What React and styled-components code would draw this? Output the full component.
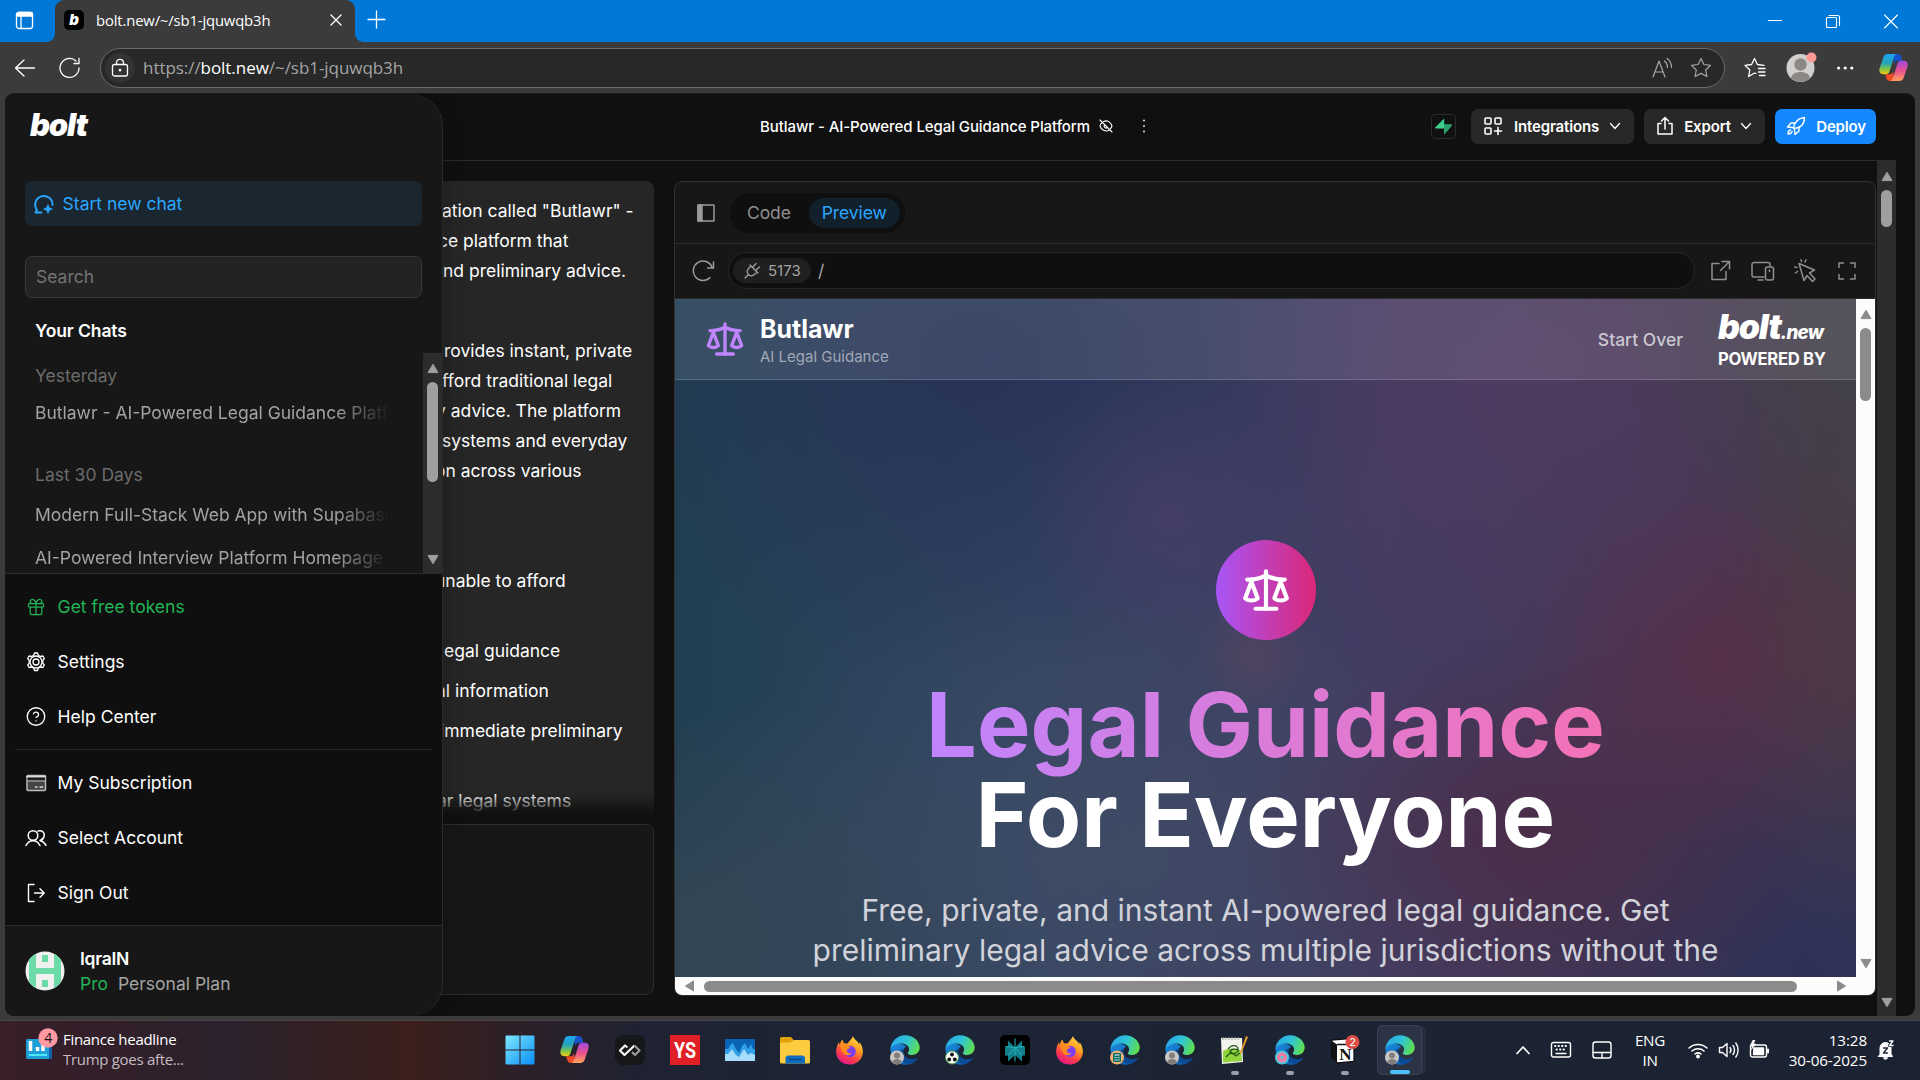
import React from 'react';
import styled, { createGlobalStyle, css } from 'styled-components';
import { Scale, Gift, CircleHelp } from 'lucide-react';

const GlobalStyle = createGlobalStyle`
  * { box-sizing: border-box; }
  body { margin: 0; background: #3b3b3b; overflow: hidden; }
`;

const ui = `'Open Sans', 'Noto Sans', sans-serif`;
const inter = `Inter, 'Liberation Sans', sans-serif`;

const Screen = styled.div`
  width: 1920px;
  height: 1080px;
  display: flex;
  flex-direction: column;
  background: #3b3b3b;
  font-family: ${inter};
  color: #fff;
  overflow: hidden;
  white-space: nowrap;
`;

/* ---------- browser chrome ---------- */

const TitleBar = styled.div`
  height: 42px;
  background: #0078d7;
  display: flex;
  align-items: stretch;
  font-family: ${ui};
`;
const TabsButton = styled.div`
  width: 55px;
  padding: 11px 0 0 15px;
`;
const Tab = styled.div`
  width: 300px;
  background: #3b3b3b;
  border-radius: 9px 9px 0 0;
  display: flex;
  align-items: center;
  padding: 0 13px 2px 9px;
  font-size: 14.8px;
  position: relative;

  &::before, &::after {
    content: '';
    position: absolute;
    bottom: 0;
    width: 8px;
    height: 8px;
  }
  &::before { left: -8px; background: radial-gradient(circle at 0 0, transparent 7.5px, #3b3b3b 8px); }
  &::after { right: -8px; background: radial-gradient(circle at 100% 0, transparent 7.5px, #3b3b3b 8px); }
`;
const Favicon = styled.div`
  width: 20px;
  height: 20px;
  border-radius: 5px;
  background: #000;
  font: italic 900 15px ${inter};
  line-height: 19px;
  text-align: center;
  margin-right: 12px;
`;
const TabTitle = styled.span`
  flex: 1;
  letter-spacing: -0.13px;
`;
const NewTab = styled.div`
  padding: 10px 0 0 12px;
  flex: 1;
`;
const WindowButtons = styled.div`
  display: flex;
  gap: 38px;
  padding: 11px 19px 0 0;
`;
const Toolbar = styled.div`
  height: 51px;
  display: flex;
  align-items: center;
  padding: 0 12px 0 14px;
  font-family: ${ui};
`;
const NavButtons = styled.div`
  display: flex;
  gap: 23px;
  width: 86px;
`;
const AddressBar = styled.div`
  width: 1625px;
  height: 40px;
  border: 1px solid #6a6a6a;
  border-radius: 20px;
  background: #282828;
  display: flex;
  align-items: center;
  padding: 0 12px 0 4px;
`;
const LockCircle = styled.div`
  width: 30px;
  height: 30px;
  border-radius: 50%;
  background: #333;
  display: grid;
  place-items: center;
  margin-right: 8px;
`;
const Url = styled.span`
  flex: 1;
  font-size: 17px;
  color: #a5a5a5;
  letter-spacing: -0.05px;
  b { font-weight: 400; color: #fff; }
`;
const BarIcons = styled.div`
  display: flex;
  gap: 17px;
  align-items: center;
`;
const ToolbarRight = styled.div`
  flex: 1;
  display: flex;
  align-items: center;
  justify-content: flex-end;
  gap: 20px;
  svg:last-child { margin-left: 4px; }
`;

/* ---------- app ---------- */

const AppFrame = styled.div`
  height: 923px;
  margin: 0 5px;
  border-radius: 9px;
  background: #101010;
  position: relative;
  overflow: hidden;
  border-top: 1px solid #1c1c1c;
`;
const AppHeader = styled.header`
  width: 1891px;
  height: 67px;
  border-bottom: 1px solid #2b2b2b;
  display: flex;
  align-items: center;
  padding: 0 20px 2px 755px;
`;
const ProjectTitle = styled.div`
  flex: 1;
  display: flex;
  align-items: center;
  font-size: 15px;
  font-weight: 500;
  color: #fff;
  span { width: 339px; letter-spacing: -0.08px; }
  svg + svg { margin-left: 21px; }
`;
const SupabaseBadge = styled.div`
  width: 25px;
  height: 25px;
  border: 1px solid #2b2b2b;
  border-radius: 4px;
  display: grid;
  place-items: center;
  margin-right: 15px;
`;
const HeaderButton = styled.button`
  width: ${(p) => p.$w}px;
  height: 35px;
  margin-left: ${(p) => p.$ml || 0}px;
  padding: 0 ${(p) => (p.$primary ? 10 : 13)}px 0 11px;
  border: 0;
  border-radius: 7px;
  background: ${(p) => (p.$primary ? '#1488fc' : '#282828')};
  color: #fff;
  font: 600 15px ${inter};
  letter-spacing: -0.15px;
  display: flex;
  align-items: center;
  justify-content: space-between;
`;
const Body = styled.main`
  height: 855px;
  display: flex;
`;
const ChatColumn = styled.section`
  width: 649px;
  padding-top: 20px;
  display: flex;
  flex-direction: column;
`;
const Message = styled.div`
  height: 635px;
  background: #262626;
  border-radius: 8px 8px 0 0;
  padding: 15px 0 0 437px;
  position: relative;

  &::after {
    content: '';
    position: absolute;
    left: 0; right: 0; bottom: 0;
    height: 23px;
    background: linear-gradient(rgba(16,16,16,0), #101010 95%);
  }
`;
const MessageLine = styled.p`
  margin: ${(p) => p.$gap || 0}px 0 0 ${(p) => p.$shift || 0}px;
  font-size: 17.5px;
  line-height: 30px;
  color: #fff;
`;
const PromptBox = styled.div`
  height: 171px;
  margin-top: 8px;
  background: #171717;
  border: 1px solid #2d2d2d;
  border-radius: 8px;
`;
const Workbench = styled.section`
  width: 1202px;
  height: 815px;
  margin: 20px 1px 0 20px;
  background: #171717;
  border: 1px solid #303030;
  border-radius: 8px;
  overflow: hidden;
`;
const ModeRow = styled.div`
  height: 62px;
  border-bottom: 1px solid #2d2d2d;
  display: flex;
  align-items: center;
  padding: 0 0 0 21px;
`;
const ModePill = styled.div`
  width: 175px;
  height: 40px;
  margin-left: 14px;
  border-radius: 20px;
  background: #0f0f0f;
  display: flex;
  align-items: center;
  padding: 5px 4px;
  font-size: 17.5px;
  letter-spacing: -0.1px;
`;
const Mode = styled.div`
  height: 30px;
  line-height: 30px;
  border-radius: 15px;
  padding: 0 13px;
  color: #8f8f8f;
  margin-right: 5px;
  ${(p) => p.$on && css`
    color: #2ba6ff;
    background: #11202a;
    margin: 0;
  `}
`;
const UrlRow = styled.div`
  height: 55px;
  border-bottom: 1px solid #2d2d2d;
  display: flex;
  align-items: center;
  padding: 0 18px 1px 17px;
`;
const UrlInput = styled.div`
  width: 967px;
  height: 37px;
  margin: 0 15px 0 13px;
  border: 1px solid #272727;
  border-radius: 19px;
  background: #0f0f0f;
  display: flex;
  align-items: center;
  padding-left: 4px;
  font-size: 17.5px;
  color: #a3a3a3;
`;
const Port = styled.div`
  width: 78px;
  height: 25px;
  border-radius: 13px;
  background: #1f1f1f;
  font-size: 15px;
  display: flex;
  align-items: center;
  gap: 7px;
  padding-left: 11px;
  margin-right: 7px;
`;
const RowIcons = styled.div`
  flex: 1;
  display: flex;
  justify-content: space-between;
  align-items: center;
  color: #8f8f8f;
`;
const Frame = styled.div`
  display: grid;
  grid-template-columns: 1181px 19px;
  grid-template-rows: 678px 18px;
  background: #fcfcfc;
`;

/* ---------- previewed site ---------- */

const Site = styled.div`
  overflow: hidden;
  background:
    radial-gradient(ellipse 260px 300px at 1200px 0px, rgba(64,66,74,1), transparent),
    radial-gradient(ellipse 160px 480px at 1200px 220px, rgba(74,62,68,.8), transparent),
    radial-gradient(circle 140px at 490px 215px, rgba(90,64,112,.4), transparent),
    radial-gradient(circle 60px at 580px 355px, rgba(105,72,90,.4), transparent),
    radial-gradient(ellipse 340px 290px at 860px 80px, rgba(86,60,100,.6), transparent),
    radial-gradient(ellipse 220px 190px at 1050px 360px, rgba(96,44,68,.6), transparent),
    radial-gradient(ellipse 300px 190px at 860px 540px, rgba(76,42,66,.75), transparent),
    radial-gradient(ellipse 420px 320px at 310px 60px, rgba(36,46,84,.8), transparent),
    radial-gradient(ellipse 380px 340px at 1181px 700px, rgba(46,50,88,1) 20%, transparent),
    radial-gradient(ellipse 320px 240px at 30px 640px, rgba(58,72,86,.8), transparent),
    radial-gradient(ellipse 420px 300px at 430px 560px, rgba(66,78,102,.7), transparent),
    linear-gradient(90deg, #203f51 0%, #334563 30%, #433b62 60%, #47344b 100%);
`;
const SiteHeader = styled.div`
  height: 81px;
  background: rgba(255,255,255,.1);
  border-bottom: 1px solid rgba(255,255,255,.16);
  display: flex;
  align-items: center;
  padding: 0 30px 0 30px;
`;
const Brand = styled.div`
  flex: 1;
  padding-left: 15px;
  h2 { margin: 0; font-size: 25px; line-height: 35px; font-weight: 700; letter-spacing: -0.05px; }
  p { margin: 0; font-size: 15px; line-height: 20px; color: #a1a8b8; }
`;
const StartOver = styled.span`
  font-size: 17.5px;
  font-weight: 500;
  color: #c9c7d1;
  margin-right: 35px;
`;
const Powered = styled.div`
  width: 108px;
  padding-top: 0;
  font-size: 16.7px;
  font-weight: 700;
  line-height: 18px;
  letter-spacing: -0.35px;
`;
const Logo = styled.div`
  font: italic 900 ${(p) => p.$size}px/${(p) => p.$size}px ${inter};
  letter-spacing: -1.2px;
  small { font-size: 18.800px; font-weight: 800; letter-spacing: -0.8px; }
`;
const Hero = styled.div`
  padding-top: 160px;
  display: flex;
  flex-direction: column;
  align-items: center;
  h1 {
    margin: 40px 0 0;
    font-size: 90px;
    line-height: 90px;
    font-weight: 700;
    text-align: center;
    padding-bottom: 30px;
  }
  p { margin: 0; font-size: 30px; line-height: 40px; color: #d1d2da; text-align: center; }
`;
const HeroCircle = styled.div`
  width: 100px;
  height: 100px;
  border-radius: 50%;
  background: linear-gradient(90deg, #a855f7, #db2777);
  display: grid;
  place-items: center;
`;
const GradientText = styled.span`
  background: linear-gradient(90deg, #c084fc, #f472b6);
  -webkit-background-clip: text;
  background-clip: text;
  color: transparent;
`;

/* ---------- scrollbars ---------- */

const VScroll = styled.div`
  width: 19px;
  height: ${(p) => p.$h}px;
  padding: 10px 0 8px;
  background: ${(p) => (p.$light ? '#fcfcfc' : '#2c2c2c')};
  color: ${(p) => (p.$light ? '#8b8b8b' : '#9f9f9f')};
  display: flex;
  flex-direction: column;
  align-items: center;
`;
const VThumb = styled.div`
  width: 11px;
  height: ${(p) => p.$h}px;
  margin: 8px 0 auto;
  border-radius: 6px;
  background: currentColor;
`;
const HScroll = styled.div`
  display: flex;
  align-items: center;
  color: #8b8b8b;
  padding: 0 9px;
  grid-column: 1;
`;
const HThumb = styled.div`
  width: 1093px;
  height: 11px;
  margin: 0 auto 0 9px;
  border-radius: 6px;
  background: currentColor;
`;

/* ---------- sidebar ---------- */

const Sidebar = styled.aside`
  position: absolute;
  left: 0;
  top: 0;
  width: 438px;
  height: 922px;
  background: #171717;
  border-right: 1px solid #2b2b2b;
  border-radius: 0 32px 32px 0;
  box-shadow: 2px 0 20px rgba(0,0,0,.25);
  display: flex;
  flex-direction: column;
  overflow: hidden;
`;
const SidebarLogo = styled(Logo)`
  padding: 15px 0 0 25px;
  height: 87px;
`;
const StartChat = styled.div`
  height: 45px;
  margin: 0 20px;
  padding-left: 9px;
  border-radius: 7px;
  background: #1a2630;
  color: #2ba6ff;
  font-size: 17.5px;
  display: flex;
  align-items: center;
  gap: 8.6px;
`;
const Search = styled.div`
  height: 42px;
  margin: 30px 20px 0;
  padding-left: 10px;
  border: 1px solid #383838;
  border-radius: 7px;
  background: #232323;
  color: #747474;
  font-size: 17.5px;
  line-height: 40px;
`;
const ChatsTitle = styled.div`
  padding: 22px 0 0 30px;
  height: 55px;
  font-size: 17.5px;
  font-weight: 600;
  line-height: 22px;
  letter-spacing: -0.1px;
`;
const ChatList = styled.div`
  height: 220px;
  display: flex;
  justify-content: space-between;
`;
const ChatRows = styled.div`
  width: 387px;
  padding-left: 30px;
  font-size: 17.5px;
  line-height: 24px;
`;
const ChatGroup = styled.div`
  margin-top: ${(p) => p.$mt}px;
  color: #6b6b6b;
`;
const ChatItem = styled.div`
  margin-top: ${(p) => p.$mt}px;
  width: 357px;
  color: #a3a3a3;
  overflow: hidden;
  mask-image: linear-gradient(90deg, #000 300px, transparent 354px);
`;
const Menu = styled.div`
  height: 353px;
  background: #0f0f0f;
  border-top: 1px solid #2b2b2b;
  border-bottom: 1px solid #2b2b2b;
  padding-top: 5px;
`;
const MenuItem = styled.div`
  height: 55px;
  padding-left: 20px;
  display: flex;
  align-items: center;
  gap: 10.6px;
  font-size: 17.5px;
  color: ${(p) => p.$color || '#fff'};
  svg { width: 22px; }
`;
const Divider = styled.div`
  height: 1px;
  margin: 5px 10px;
  background: #262626;
`;
const Profile = styled.div`
  flex: 1;
  display: flex;
  align-items: center;
  gap: 15px;
  padding: 0 0 0 20px;
  font-size: 17.5px;
  line-height: 25px;
  strong { font-weight: 600; display: block; letter-spacing: -0.3px; }
  span { color: #a3a3a3; margin-left: 10px; }
  em { font-style: normal; color: #22b455; }
`;

/* ---------- taskbar ---------- */

const Taskbar = styled.footer`
  height: 60px;
  margin-top: 4px;
  border-top: 1px solid #4a4648;
  background: linear-gradient(90deg, #381e27 0, #2b212c 230px, #3b1f1b 410px, #2c2029 520px, #1f2232 640px, #1c2435 900px, #1b2231 1920px);
  display: flex;
  font-family: ${ui};
`;
const News = styled.div`
  width: 492px;
  padding: 8px 0 0 25px;
  display: flex;
  font-size: 15px;
  line-height: 20px;
  letter-spacing: -0.3px;
  svg { margin-top: -1px; }
  div { color: #c5bcc0; margin-left: 4px; }
  b { display: block; font-weight: 400; color: #fff; }
`;
const Apps = styled.div`
  display: flex;
  width: 950px;
`;
const AppSlot = styled.div`
  width: 55px;
  height: 59px;
  display: flex;
  flex-direction: column;
  align-items: center;
  padding-top: 14px;
  svg { display: block; flex: none; }
`;
const ActiveSlot = styled(AppSlot)`
  width: 45px;
  height: 50px;
  margin: 4px 0 0 5px;
  padding-top: 9px;
  border: 1px solid #3a4152;
  border-radius: 5px;
  background: #2c3344;
  box-shadow: 5px 0 0 -1px #262d3d;
`;
const RunDot = styled.i`
  width: ${(p) => (p.$on ? 20 : 8)}px;
  height: 4px;
  border-radius: 2px;
  margin-top: ${(p) => (p.$on ? 5 : 6)}px;
  background: ${(p) => (p.$on ? '#4cc2ff' : '#99a0ab')};
`;
const Tray = styled.div`
  flex: 1;
  display: flex;
  align-items: center;
  justify-content: flex-end;
  padding: 0 25px 2px 0;
  font-size: 15.2px;
  line-height: 20px;
`;
const TrayTools = styled.div`
  display: flex;
  align-items: center;
  gap: 19px;
`;
const Lang = styled.div`
  width: 34px;
  text-align: center;
  letter-spacing: -0.3px;
  margin: 0 21px 0 20px;
`;
const Status = styled.div`
  display: flex;
  gap: 10px;
  align-items: center;
`;
const Clock = styled.div`
  text-align: right;
  margin: 0 10px 0 0;
  width: 98px;
  letter-spacing: -0.1px;
`;

/* ---------- drawings ---------- */

const Ico = ({ w = 20, h, vb, sw = 1.5, children, ...rest }) => (
  <svg width={w} height={h || w} viewBox={vb || `0 0 ${w} ${h || w}`} fill="none" stroke="currentColor"
    strokeWidth={sw} strokeLinecap="round" strokeLinejoin="round" {...rest}>{children}</svg>
);
const Up = () => <svg width="12" height="11" viewBox="0 0 12 11"><path d="M6 1.2 11 9.6H1Z" fill="currentColor" stroke="currentColor" strokeLinejoin="round" /></svg>;
const Down = () => <svg width="12" height="11" viewBox="0 0 12 11"><path d="M6 9.800 1 1.400h10Z" fill="currentColor" stroke="currentColor" strokeLinejoin="round" /></svg>;
const Side = ({ left }) => <svg width="11" height="12" viewBox="0 0 11 12"><path d={left ? 'M1.5 6 9.5 1v10Z' : 'M9.5 6 1.5 1v10Z'} fill="currentColor" stroke="currentColor" strokeLinejoin="round" /></svg>;
const Chevron = () => <Ico w={12} h={8} sw={1.3}><path d="m1.500 1.500 4.500 5 4.500-5" /></Ico>;

const Copilot = ({ size = 28 }) => (
  <svg width={size} height={size} viewBox="0 0 28 28">
    <defs>
      <linearGradient id="cpa" x1="0" y1="0" x2="0" y2="1">
        <stop offset="0" stopColor="#1ba4f2" /><stop offset=".45" stopColor="#25a5b8" /><stop offset=".75" stopColor="#7fc646" /><stop offset="1" stopColor="#fbc915" />
      </linearGradient>
      <linearGradient id="cpb" x1="0" y1="0" x2="0" y2="1">
        <stop offset="0" stopColor="#a04be0" /><stop offset=".5" stopColor="#e8508d" /><stop offset="1" stopColor="#ffa35c" />
      </linearGradient>
    </defs>
    <path d="M13 1h5c2 0 3 1.200 3.600 3l1 3.500h-4.200c-2 0-3 1-3.600 3Z" fill="#1753c8" />
    <path d="M15 27h-4.500c-2 0-3-1.200-3.600-3l-1-3.500h4c2 0 3-1 3.600-3Z" fill="#ed4a26" />
    <path d="M8.500 1h8.300c-1.300.5-1.900 1.600-2.500 3.500l-4 12.800c-.7 2.200-1.800 3.200-4 3.200H4C.8 20.500-.2 18 .5 15L4 4.500C4.800 2 6.200 1 8.500 1Z" fill="url(#cpa)" />
    <path d="M19.500 27h-8.300c1.300-.5 1.900-1.600 2.500-3.500l4-12.800c.7-2.200 1.800-3.200 4-3.200H24c3.200 0 4.200 2.500 3.500 5.500L24 23.500c-.8 2.500-2.200 3.500-4.500 3.500Z" fill="url(#cpb)" />
  </svg>
);

const EdgeBadges = {
  user: <><circle cx="7" cy="22.500" r="7" fill="#c9c7c5" /><circle cx="7" cy="20.500" r="3" fill="#807d7b" /><path d="M2 27c1-4 9-4 10 0-2.500 3.300-7.500 3.300-10 0Z" fill="#807d7b" /></>,
  ball: <><circle cx="7" cy="22.500" r="6.500" fill="#fff" stroke="#4b9d3e" /><circle cx="7" cy="19.500" r="1.900" fill="#111" /><circle cx="4.200" cy="24.500" r="1.900" fill="#111" /><circle cx="9.800" cy="24.500" r="1.900" fill="#111" /></>,
  calc: <><circle cx="7" cy="22.500" r="7" fill="#f0b070" /><rect x="3" y="18" width="8" height="9" rx="1" fill="#0d6f68" /><path d="M4.500 20h5M4.500 22.500h1m1 0h1m1 0h1m-5 2.300h1m1 0h1m1 0h1" stroke="#fff" strokeWidth="1.200" /></>,
  donut: <><circle cx="7" cy="22.500" r="7" fill="#4cc9d8" /><circle cx="7" cy="22.500" r="3.400" fill="none" stroke="#f57ca2" strokeWidth="3.400" /></>,
};
const Edge = ({ badge, id }) => (
  <svg width="30" height="30" viewBox="0 0 30 30">
    <defs>
      <linearGradient id={`g${id}`} x1="0" y1=".3" x2="1" y2=".6">
        <stop offset="0" stopColor="#2aa6e8" /><stop offset=".5" stopColor="#2fc4d6" /><stop offset="1" stopColor="#62df4a" />
      </linearGradient>
      <linearGradient id={`h${id}`} x1="0" y1="0" x2="1" y2="1">
        <stop offset="0" stopColor="#1b8de0" /><stop offset="1" stopColor="#0c4f9e" />
      </linearGradient>
    </defs>
    <path d="M.5 14C.5 23 7 29.700 15.500 29.700c5.500 0 10.200-3 12.300-6.800-6 3.200-12.300 1.100-14.100-3.400-1.300-3.200-.2-6.500 2.500-8C10 6 2 7.500.5 14Z" fill={`url(#h${id})`} />
    <path d="M10.500 16c-1.500 7 2.500 12.500 9 12.800 3.500-1 6.700-3.400 8.300-6-6 3.200-12.300 1.100-14.100-3.400-.8-2-.7-4 .2-5.600-1.400 0-2.900.8-3.400 2.200Z" fill="#0b4a94" />
    <path d="M.4 14.500C.8 6.500 7.200.3 15 .3c8.300 0 14.700 5.900 14.700 12.300 0 4.300-3.300 7.400-7.400 7.400-2.600 0-4.500-.8-4.500-1.800 0-.8 1.300-1.300 1.300-3.600 0-3.500-3.400-6-8-6C6 8.600 1.700 11 .4 14.500Z" fill={`url(#g${id})`} />
    {EdgeBadges[badge]}
  </svg>
);
const Firefox = ({ id }) => (
  <svg width="29" height="31" viewBox="0 0 30 32">
    <defs>
      <linearGradient id={id} x1=".8" y1="0" x2=".3" y2="1">
        <stop offset="0" stopColor="#ffe14a" /><stop offset=".4" stopColor="#ff9a1f" /><stop offset=".72" stopColor="#ff3d4a" /><stop offset="1" stopColor="#e0148c" />
      </linearGradient>
    </defs>
    <path d="M18.500 1c.5 3 6 5.500 6.500 9 .4-1 .3-2 0-3 3 3.500 4.200 7.500 3.800 11.500C28 26 22 30.500 15 30.500S1.500 25.500 1.200 18c-.2-4 1-7.500 2.800-10.500.2 1 .5 1.500 1 2.200 1-2.700 1.500-4.200 3-5 0 1.500.5 2.800 1.500 3.800l3.500.2C14.500 6 17.500 4.500 18.500 1Z" fill={`url(#${id})`} />
    <circle cx="15.500" cy="17" r="6" fill="#7a3ff0" />
    <path d="M5 10c3-1.500 7-.5 8.500 1.800l3 .4c-.4 1.800-3.500 1.800-4.200 3-.7 2.300 1.700 4.300 4.700 3.300-2 3.500-8 3-9.500-1.500C6.500 14 5.500 12.500 5 10Z" fill="#ff8a1e" />
  </svg>
);
const SquareIcon = ({ children }) => <svg width="30" height="30" viewBox="0 0 30 30">{children}</svg>;

const menuTop = [
  { label: 'Get free tokens', color: '#22b455', icon: <Gift size={20} strokeWidth={1.5} /> },
  {
    label: 'Settings',
    icon: <Ico w={22} sw={1.3}><circle cx="11" cy="11" r="3" /><circle cx="11" cy="11" r="6" /><path d="M9.500 2h3l.8 2.300 2.200 1.200 2.400-.5 1.400 2.500-1.500 1.900v2.700l1.500 1.900-1.400 2.500-2.400-.5-2.200 1.200-.8 2.300h-3l-.8-2.300-2.200-1.200-2.400.5L2.700 14l1.500-1.900V9.400L2.700 7.500 4.100 5l2.400.5 2.200-1.200Z" /></Ico>,
  },
  { label: 'Help Center', icon: <CircleHelp size={21} strokeWidth={1.5} /> },
];
const menuBottom = [
  {
    label: 'My Subscription',
    icon: <Ico w={22} sw={1.500}><rect x="2" y="3.500" width="18.500" height="15" rx="1" fill="#444" stroke="#bbb" /><path d="M2 4.500h18" stroke="#ddd" /><path d="M3 7h16.500" stroke="#111" /><path d="M3 9h16.500" stroke="#bbb" strokeWidth="1" /><path d="M10.500 15h1.500m3 0h2.500" stroke="#ddd" /></Ico>,
  },
  {
    label: 'Select Account',
    icon: <Ico w={22} sw={1.500}><circle cx="8" cy="8.500" r="4.800" /><path d="M1 18.500c1.500-3 4-4.800 7-4.800s5.500 1.800 7 4.800M13 4c4.500-1.200 7 2 6 5.500-.5 2-2 3.500-4 4 2.500.5 4.500 2.200 6 4.800" /></Ico>,
  },
  {
    label: 'Sign Out',
    icon: <Ico w={22} sw={1.400}><path d="M9 2.500H3.500v17H9M9.500 11H19M15 6.800l4.200 4.200-4.200 4.200" /></Ico>,
  },
];

const lines = [
  { t: 'ation called "Butlawr" -' },
  { t: 'ce platform that', shift: -4 },
  { t: 'nd preliminary advice.', shift: 1 },
  { t: 'rovides instant, private', gap: 50, shift: 2 },
  { t: 'fford traditional legal' },
  { t: 'y advice. The platform', shift: -6 },
  { t: 'systems and everyday' },
  { t: 'on across various', shift: -7 },
  { t: 'unable to afford', gap: 80, shift: -7 },
  { t: 'egal guidance', gap: 40, shift: 2 },
  { t: 'al information', gap: 10, shift: -6 },
  { t: 'immediate preliminary', gap: 10, shift: -2 },
  { t: 'ar legal systems', gap: 40, shift: -5 },
];

const apps = [
  <SquareIcon><defs><linearGradient id="win" x1="0" y1="0" x2="1" y2="1"><stop offset="0" stopColor="#7de8ff" /><stop offset="1" stopColor="#0a8ff5" /></linearGradient></defs><path d="M.5 1.500a1 1 0 0 1 1-1h13v14H.5ZM15.500.500h13a1 1 0 0 1 1 1v13h-14ZM.5 15.500h14v14h-13a1 1 0 0 1-1-1ZM15.500 15.500h14v13a1 1 0 0 1-1 1h-13Z" fill="url(#win)" /></SquareIcon>,
  <Copilot size={29} />,
  <SquareIcon><rect width="30" height="30" rx="8" fill="#151719" /><g fill="none" strokeWidth="2.200" strokeLinejoin="round"><path d="M12.500 12.500 10 10.500 5 15.500 9.500 20 19.500 10.500" stroke="#f5f5f5" /><path d="m19.500 10.500 5 5L20 20l-3-3" stroke="#9a9a9a" /></g></SquareIcon>,
  <SquareIcon><rect width="30" height="30" fill="#e02026" /><text x="15" y="23" textAnchor="middle" fontFamily="Roboto, sans-serif" fontWeight="700" fontSize="22" fill="#fff" textLength="22" lengthAdjust="spacingAndGlyphs">YS</text></SquareIcon>,
  <SquareIcon><rect y="4" width="30" height="22" rx="1" fill="#0b63b5" /><path d="M0 14h3l3-5 2-1 3 6 3 4 3-7 3-3 3 6 3-5 2 5h2v12H0Z" fill="#2f9fe8" /><path d="M0 19h3l4-5 4 6 3 2 5-8 4 6 3-2 4 2v5a1 1 0 0 1-1 1H1a1 1 0 0 1-1-1Z" fill="#a8dcfb" /></SquareIcon>,
  <SquareIcon><path d="M0 3.500A1.500 1.500 0 0 1 1.500 2H11l3 3.500V12H0Z" fill="#e2a20c" /><path d="M0 7.500h10l4-2.500h14.500A1.500 1.500 0 0 1 30 6.500v20.500a1.500 1.500 0 0 1-1.500 1.500h-27A1.500 1.500 0 0 1 0 27Z" fill="#fdcb40" /><path d="M5.500 23.500a3 3 0 0 1 3-3h13.500a3 3 0 0 1 3 3v5h-19.500Z" fill="#0f6cc0" /><path d="M9 24.500h13" stroke="#0a4a8c" strokeWidth="1.500" /></SquareIcon>,
  <Firefox id="fa" />,
  <Edge id="e1" badge="user" />,
  <Edge id="e2" badge="ball" />,
  <SquareIcon><rect width="30" height="30" rx="5" fill="#000" /><path d="M15 12.500 8 5.500v6H5v9h3v6l7-6.500 7 6.500v-6h3v-9h-3v-6Z" fill="#12818c" /><g fill="none" stroke="#22b8c4" strokeWidth="1"><path d="M15 3.500v23M15 12.500l-9-1M15 12.500l9-1M15 12.500l-7 8M15 12.500l7 8" /></g></SquareIcon>,
  <Firefox id="fb" />,
  <Edge id="e3" badge="calc" />,
  <Edge id="e4" badge="user" />,
  <SquareIcon><path d="M1 3h21l1 24-21 2Z" fill="#f3f3ee" /><path d="M3 16c5-3 12-3 18 0l1 10-19 1.500Z" fill="#8fd43a" /><path d="M8 14c3-4 9-5 10 0s-7 6-8 3 7-4 9-1M6 22l5-5 5 4 4-3" fill="none" stroke="#245b18" strokeWidth="1.300" /><path d="M3 2v3m3-3v3m3-3v3m3-3v3m3-3v3m3-3v3" stroke="#999" /><path d="m28 2-6.500 16-1.500 2 .3-3L26 1Z" fill="#e69a2a" /></SquareIcon>,
  <Edge id="e5" badge="donut" />,
  <svg width="30" height="30" viewBox="0 1 30 30"><path d="m1.500 6 18-1.500 4.500 4v19l-16.500 1.500-6-5.500Z" fill="#fff" stroke="#111" strokeWidth="1.300" /><path d="m2 7 5 3.500v18l-5-5Z" fill="#111" /><path d="M7 10.500h17" stroke="#111" strokeWidth="1.500" /><text x="15.500" y="25.500" textAnchor="middle" fontFamily="Liberation Serif, serif" fontWeight="700" fontSize="17" fill="#111">N</text><circle cx="22.500" cy="8" r="7" fill="#dd4b44" /><text x="22.500" y="12" textAnchor="middle" fontFamily="Inter, sans-serif" fontSize="11" fill="#fff">2</text></svg>,
];
const running = [13, 14, 15];

function BrowserChrome() {
  return (
    <>
      <TitleBar>
        <TabsButton>
          <Ico w={19} sw={1.300}><rect x="1.500" y="1.500" width="16" height="16" rx="2.500" /><path d="M1.500 3.500a2 2 0 0 1 2-2h12a2 2 0 0 1 2 2V5h-16Z" fill="#fff" /><path d="M6 5v12.500" /></Ico>
        </TabsButton>
        <Tab>
          <Favicon>b</Favicon>
          <TabTitle>bolt.new/~/sb1-jquwqb3h</TabTitle>
          <Ico w={12} sw={1.300}><path d="m1 1 10 10M11 1 1 11" /></Ico>
        </Tab>
        <NewTab><Ico w={19} sw={1.300}><path d="M9.500 1v17M1 9.500h17" /></Ico></NewTab>
        <WindowButtons>
          <Ico w={20} sw={1.100}><path d="M3.500 9.500h13" /></Ico>
          <Ico w={20} sw={1.100}><rect x="3.500" y="6.500" width="10" height="10" rx="1" /><path d="M6 4.500h8.500a2 2 0 0 1 2 2v8" /></Ico>
          <Ico w={20} sw={1.100}><path d="m3.500 4 13 13M16.500 4l-13 13" /></Ico>
        </WindowButtons>
      </TitleBar>
      <Toolbar>
        <NavButtons>
          <Ico w={22} sw={1.300}><path d="M20.500 11H2M10 3l-8.500 8L10 19" /></Ico>
          <Ico w={22} sw={1.300}><path d="M20 11a9.500 9.500 0 1 1-3-7M20 1.500v5h-5" /></Ico>
        </NavButtons>
        <AddressBar>
          <LockCircle><Ico w={18} h={19} sw={1.300}><rect x="1.500" y="6.500" width="15" height="11.500" rx="2" /><path d="M5.500 6.500V4.800a3.500 3.500 0 0 1 7 0v1.700" /><circle cx="9" cy="12.200" r=".7" fill="#fff" /></Ico></LockCircle>
          <Url>https://<b>bolt.new</b>/~/sb1-jquwqb3h</Url>
          <BarIcons>
            <Ico w={22} sw={1.200} color="#a5a5a5"><path d="m2 20 6-16 6 16M4 15h8M13.500 4c2 1.500 3 3.500 3 6.500M16 1.500c3 2 4.500 5 4.500 9" /></Ico>
            <Ico w={22} sw={1.200} color="#a5a5a5"><path d="m11 1.500 2.900 6 6.600.9-4.800 4.600 1.200 6.500-5.900-3.100-5.900 3.100 1.200-6.500L1.500 8.400l6.600-.9Z" /></Ico>
          </BarIcons>
        </AddressBar>
        <ToolbarRight>
          <Ico w={22} sw={1.300}><path d="m12 16.500-1.500-.5-5.900 3.500L5.800 13 1 8.400l6.600-.9 2.900-6 2.900 6 6.600.9M14.500 11.500H21M14.500 15H21M15.500 18.500H21" /></Ico>
          <svg width="31" height="31" viewBox="0 0 31 31"><circle cx="14.500" cy="16" r="14" fill="#d2d0ce" /><circle cx="14.500" cy="12.500" r="6.200" fill="#8c8885" /><path d="M5 26c1-8 18-8 19 0-5 5-14 5-19 0Z" fill="#8c8885" /><circle cx="25.500" cy="5.500" r="5" fill="#ff9a94" /></svg>
          <Ico w={18} h={6}><g fill="#fff" stroke="none"><circle cx="1.600" cy="3" r="1.600" /><circle cx="8.200" cy="3" r="1.600" /><circle cx="14.800" cy="3" r="1.600" /></g></Ico>
          <Copilot size={29} />
        </ToolbarRight>
      </Toolbar>
    </>
  );
}

function AppSidebar() {
  return (
    <Sidebar>
      <SidebarLogo $size={31}>bolt</SidebarLogo>
      <StartChat>
        <Ico w={20} sw={1.900}><path d="M7.500 18.500H1.500L3 16A8.700 8.700 0 1 1 18.600 11" /><path d="m14 10.500 1.400 3.100 3.100 1.400-3.100 1.400L14 19.500l-1.400-3.100L9.500 15l3.100-1.400Z" fill="currentColor" strokeWidth=".5" /></Ico>
        Start new chat
      </StartChat>
      <Search>Search</Search>
      <ChatsTitle>Your Chats</ChatsTitle>
      <ChatList>
        <ChatRows>
          <ChatGroup $mt={11}>Yesterday</ChatGroup>
          <ChatItem $mt={13}>Butlawr - AI-Powered Legal Guidance Platf</ChatItem>
          <ChatGroup $mt={38}>Last 30 Days</ChatGroup>
          <ChatItem $mt={16}>Modern Full-Stack Web App with Supabase</ChatItem>
          <ChatItem $mt={19}>AI-Powered Interview Platform Homepage</ChatItem>
        </ChatRows>
        <VScroll $h={220}><Up /><VThumb $h={100} /><Down /></VScroll>
      </ChatList>
      <Menu>
        {menuTop.map((m) => <MenuItem key={m.label} $color={m.color}>{m.icon}{m.label}</MenuItem>)}
        <Divider />
        {menuBottom.map((m) => <MenuItem key={m.label}>{m.icon}{m.label}</MenuItem>)}
      </Menu>
      <Profile>
        <svg width="40" height="40" viewBox="0 0 40 40"><defs><clipPath id="av"><circle cx="20" cy="20" r="19.500" /></clipPath></defs><g clipPath="url(#av)"><path d="M0 0h40v40H0Z" fill="#f0f0f0" /><path d="M4 0h7v17h18V0h7v40h-7V23H11v17H4ZM17 4h6v7h-6ZM17 29h6v7h-6Z" fill="#6ddba8" /></g></svg>
        <div><strong>IqraIN</strong><em>Pro</em><span>Personal Plan</span></div>
      </Profile>
    </Sidebar>
  );
}

function Preview() {
  return (
    <Workbench>
      <ModeRow>
        <Ico w={20} sw={1.500} color="#9a9a9a"><rect x="2" y="2" width="16" height="16" rx=".5" /><path d="M2 2h4v16H2Z" fill="currentColor" /></Ico>
        <ModePill><Mode>Code</Mode><Mode $on>Preview</Mode></ModePill>
      </ModeRow>
      <UrlRow>
        <Ico w={23} sw={1.500} color="#9a9a9a"><path d="M18 18.500A9.700 9.700 0 1 1 20 8M21.500 3v6h-6" /></Ico>
        <UrlInput>
          <Port>
            <Ico w={17} sw={1.200}><path d="m1 16 3.500-3.500M4.500 12.500C2.500 10.500 3 8 5 6l2-2 6 6-2 2c-2 2-4.500 2.500-6.500.5ZM6 3l8 8M9 5l3-3.500M12 8l3.500-3" /></Ico>
            5173
          </Port>/
        </UrlInput>
        <RowIcons>
          <Ico w={21}><path d="M9 3.500H2v16h14v-8M12 1.500h7.500V9M19.500 1.500l-9 9" /></Ico>
          <Ico w={25} h={22}><path d="M14 17H4a2 2 0 0 1-2-2V4.500a2 2 0 0 1 2-2h14a2 2 0 0 1 2 2V6M8 20h5" /><rect x="15.500" y="7" width="8" height="13" rx="2" /><path d="M19.500 10v1.500" /></Ico>
          <Ico w={24} h={24}><path d="m5 4.500 15.500 6.500-5 3 5.500 6-2.500 2.500-5.500-6-3 5ZM7 .8 7.500 2.500M12 1l-1 2M.800 8l2 .5M1.500 14l2-1.500" /></Ico>
          <Ico w={20}><path d="M2 6.500V2h4.500M13.500 2H18v4.500M18 13.500V18h-4.500M6.500 18H2v-4.500" /></Ico>
        </RowIcons>
      </UrlRow>
      <Frame>
        <Site>
          <SiteHeader>
            <Scale size={40} color="#c084fc" strokeWidth={2} />
            <Brand><h2>Butlawr</h2><p>AI Legal Guidance</p></Brand>
            <StartOver>Start Over</StartOver>
            <Powered><Logo $size={34}>bolt<small>.new</small></Logo>POWERED BY</Powered>
          </SiteHeader>
          <Hero>
            <HeroCircle><Scale size={50} strokeWidth={2} /></HeroCircle>
            <h1><GradientText>Legal Guidance</GradientText><br />For Everyone</h1>
            <p>Free, private, and instant AI-powered legal guidance. Get<br />preliminary legal advice across multiple jurisdictions without the</p>
          </Hero>
        </Site>
        <VScroll $light $h={678}><Up /><VThumb $h={73} /><Down /></VScroll>
        <HScroll><Side left /><HThumb /><Side /></HScroll>
      </Frame>
    </Workbench>
  );
}

function WindowsTaskbar() {
  return (
    <Taskbar>
      <News>
        <svg width="34" height="34" viewBox="0 0 34 34"><rect x="1" y="11" width="26" height="20" rx="1.500" fill="#1d9fd8" /><path d="M24 11h3v20h-3Z" fill="#1460a8" /><path d="M5.500 13v10M12.500 19v4M18 16v7" stroke="#fff" strokeWidth="3.500" /><path d="M4 27h18" stroke="#4de8f5" strokeWidth="2" /><circle cx="23" cy="10" r="9.700" fill="#ff9aa2" /><text x="23" y="15" textAnchor="middle" fontSize="14" fill="#111" fontFamily="Open Sans, sans-serif">4</text></svg>
        <div><b>Finance headline</b>Trump goes afte...</div>
      </News>
      <Apps>
        {apps.map((icon, i) => <AppSlot key={i}>{icon}{running.includes(i) && <RunDot />}</AppSlot>)}
        <ActiveSlot><Edge id="e6" badge="user" /><RunDot $on /></ActiveSlot>
      </Apps>
      <Tray>
        <TrayTools>
          <Ico w={16} h={10} sw={1.700}><path d="m2 8.500 6-6.500 6 6.500" /></Ico>
          <Ico w={22} h={18} sw={1.400}><rect x="1.500" y="1.500" width="19" height="14.500" rx="2" /><path d="M5 5h.5M8.500 5H9M12 5h.5M15.500 5h.5M6.500 8.500H7M10 8.500h.5M13.500 8.500h.5" strokeWidth="1.800" /><path d="M6 12.500h10" /></Ico>
          <Ico w={22} h={20} sw={1.400}><rect x="2" y="2" width="18" height="16" rx="2.500" /><path d="M2 12.500h18M11 12.500V18" /></Ico>
        </TrayTools>
        <Lang>ENG<br />IN</Lang>
        <Status>
          <Ico w={20} h={18} sw={1.500}><path d="M1 7a13 13 0 0 1 18 0M4 10a9 9 0 0 1 12 0M7 13a5 5 0 0 1 6 0" /><circle cx="10" cy="15.500" r="1.200" fill="#fff" /></Ico>
          <Ico w={21} h={18} sw={1.400}><path d="M1.500 6.500h3L9 2.500v13l-4.500-4h-3ZM12 6.500c1.200 1.500 1.200 3.500 0 5M15 4.500c2 2.500 2 6.500 0 9M17.800 2c3 4 3 10 0 14" /></Ico>
          <Ico w={20} h={20} sw={1.400}><rect x="1.500" y="5" width="16" height="12" rx="2" /><path d="M5 8h9.500v6.500H4.500Z" fill="#fff" /><path d="M19 9.500v3" strokeWidth="2" /><path d="M4 0 1 6h2.500L2 10l5-6H4.500L6 0Z" fill="#fff" strokeWidth=".5" /></Ico>
        </Status>
        <Clock>13:28<br />30-06-2025</Clock>
        <Ico w={18} h={22} sw={1}><path d="M3 15V9a5.500 5.500 0 0 1 11 0v6l1.500 2.500h-14ZM6.500 19a2.200 2.200 0 0 0 4 0Z" fill="#fff" /><path d="M6.500 9h4l-4 5h4" stroke="#1c2435" strokeWidth="1.400" /><path d="M12.500 2H16l-3.500 4.500H16" stroke="#1c2435" strokeWidth="3" /><path d="M12.500 2H16l-3.500 4.500H16" strokeWidth="1.300" /></Ico>
      </Tray>
    </Taskbar>
  );
}

export function App() {
  return (
    <Screen>
      <GlobalStyle />
      <BrowserChrome />
      <AppFrame>
        <AppHeader>
          <ProjectTitle>
            <span>Butlawr - AI-Powered Legal Guidance Platform</span>
            <Ico w={14} sw={1.100}><path d="M4.500 2.500C8 .8 12 3 13 7c-.3 1-.8 2-1.500 2.700M2.700 4C1.800 4.800 1.200 6 1 7c1 4 5.500 6.200 9 4.300M5.500 5.800a2 2 0 0 0 2.800 2.800M1 1l12 12" /></Ico>
            <Ico w={20}><g fill="#ccc" stroke="none"><circle cx="10" cy="4.500" r="1.100" /><circle cx="10" cy="10" r="1.100" /><circle cx="10" cy="15.500" r="1.100" /></g></Ico>
          </ProjectTitle>
          <SupabaseBadge><svg width="17" height="17" viewBox="0 0 17 17"><path d="M9.200.5v6H16c.7 0 1 .6.600 1.200L9.200 16.500v-6H.9c-.7 0-1-.6-.6-1.200Z" fill="#3ecf8e" /><path d="M9.200 6.500H16c.7 0 1 .6.600 1.200L9.200 16.500Z" fill="#2a9f6c" /></svg></SupabaseBadge>
          <HeaderButton $w={163}>
            <Ico w={22} sw={1.600}><rect x="3" y="3" width="6" height="6" rx="1" /><rect x="13" y="3" width="6" height="6" rx="1" /><rect x="3" y="13" width="6" height="6" rx="1" /><path d="M16 12.500v7M12.500 16h7" /></Ico>
            Integrations<Chevron />
          </HeaderButton>
          <HeaderButton $w={121} $ml={10}>
            <Ico w={20} sw={1.500}><path d="M6 7.500H3v10.500h14V7.500h-3M10 13V1.500M6.500 5 10 1.500 13.500 5" /></Ico>
            Export<Chevron />
          </HeaderButton>
          <HeaderButton $w={101} $ml={10} $primary>
            <Ico w={20} sw={1.400}><path d="M7.500 12.500c.5-5 3.500-10 11-11 0 7-4.500 10.500-11 11ZM8.500 7H5L1.500 11l5 .5M13 11.500V15l-4 3.500-.5-5M4.500 14c-2 .5-2.500 2.500-2.500 4 1.500 0 3.500-.5 4-2.500" /></Ico>
            Deploy
          </HeaderButton>
        </AppHeader>
        <Body>
          <ChatColumn>
            <Message>
              {lines.map((l) => <MessageLine key={l.t} $gap={l.gap} $shift={l.shift}>{l.t}</MessageLine>)}
            </Message>
            <PromptBox />
          </ChatColumn>
          <Preview />
          <VScroll $h={855}><Up /><VThumb $h={37} /><Down /></VScroll>
        </Body>
        <AppSidebar />
      </AppFrame>
      <WindowsTaskbar />
    </Screen>
  );
}

export default App;
